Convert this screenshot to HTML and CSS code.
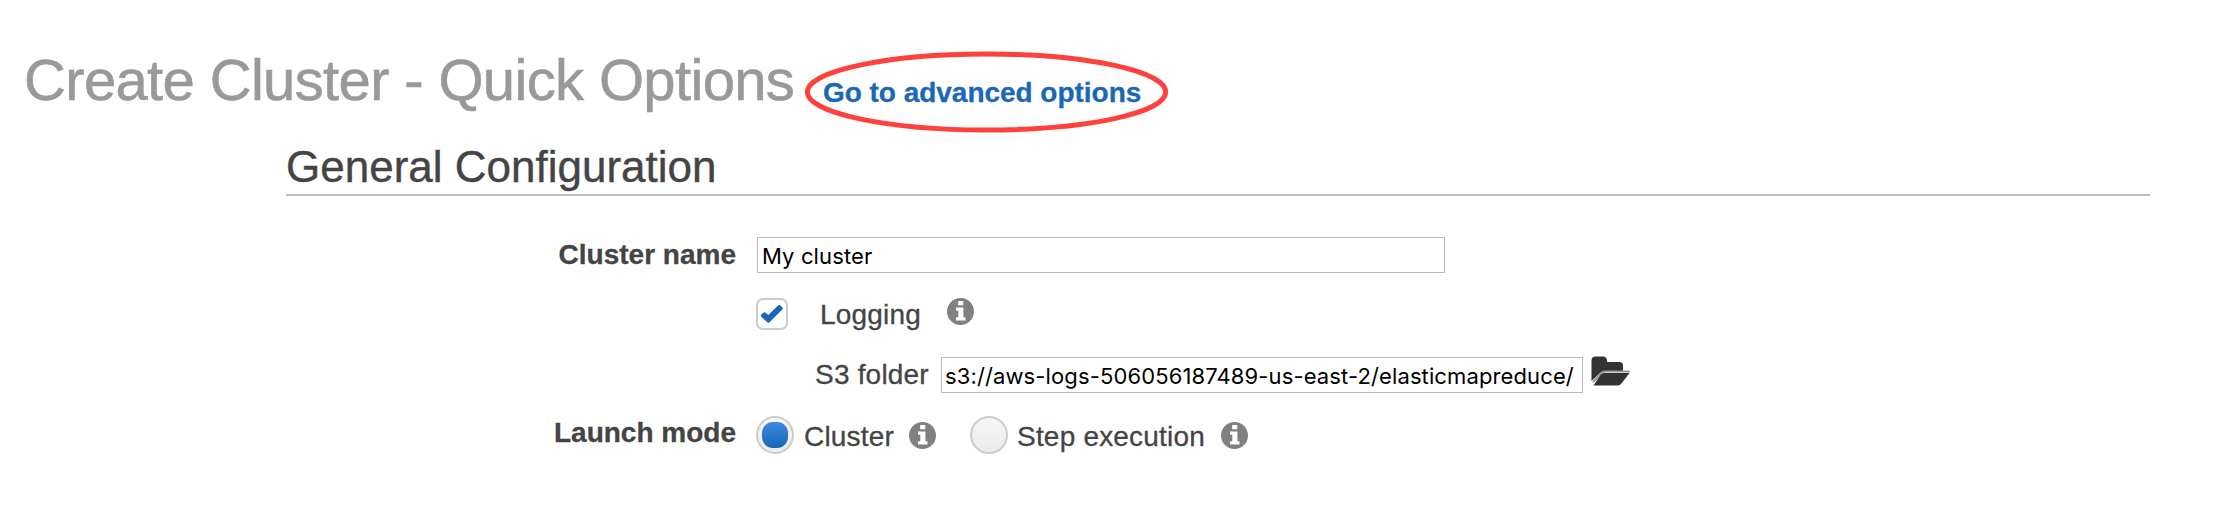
FILE: index.html
```html
<!DOCTYPE html>
<html lang="en">
<head>
<meta charset="utf-8">
<title>Create Cluster - Quick Options</title>
<link rel="stylesheet" href="styles.css">
</head>
<body>
<svg class="defs" width="0" height="0" aria-hidden="true">
  <symbol id="info" viewBox="0 0 27 27">
    <circle cx="13.5" cy="13.5" r="13.5" fill="#808080"/>
    <path fill="#fff" d="M11.2 3h5.1v4.2h-5.1zM9 9.4h7.4v9.9h2v3.3H9v-3.3h2.3v-6.6H9z"/>
  </symbol>
</svg>
<main class="page">
  <header class="head">
    <h1 class="title">Create Cluster - Quick Options</h1>
    <div class="callout">
      <a class="link">Go to advanced options</a>
      <svg class="ring" viewBox="0 0 366 84"><ellipse cx="182.500" cy="42" rx="179.2" ry="38" fill="none" stroke="#ff403c" stroke-width="5"/></svg>
    </div>
  </header>
  <h2 class="section">General Configuration</h2>
  <form class="form">
    <div class="row row-name">
      <label class="label">Cluster name</label>
      <input class="input input-name" type="text" value="My cluster">
    </div>
    <div class="row row-logging">
      <span class="check"><svg viewBox="0 0 32 32"><path d="M5.200 16.800 7.300 14.700q1.200-1 2.400 0l2.700 2.200L22 7.500q1.200-1 2.400 0l1.900 2q1 1.100 0 2.100L13.500 24.200q-1.100 1-2.200 0L5.200 18.800q-.9-1 0-2z"/></svg></span>
      <span class="text text-logging">Logging</span>
      <svg class="info"><use href="#info"/></svg>
    </div>
    <div class="row row-folder">
      <label class="text text-folder">S3 folder</label>
      <input class="input input-folder" type="text" value="s3://aws-logs-506056187489-us-east-2/elasticmapreduce/">
      <svg class="folder" viewBox="0 0 40 30"><path d="M.5 25V4.500Q.5.500 4.500.500H12q3.700 0 4 4V6h12.500q3.500 0 3.500 3.500V15H14q-3.500 0-5.500 2.500z"/><path class="edge" d="M2 26 10 17.500q1.700-2 4-2H39"/><path d="M13.500 17H38.500L30.500 27.500q-1.500 2-4 2H2.500L9.500 19q1.500-2 4-2z"/></svg>
    </div>
    <div class="row row-mode">
      <label class="label label-mode">Launch mode</label>
      <span class="radio radio-on"></span>
      <span class="text text-cluster">Cluster</span>
      <svg class="info info-cluster"><use href="#info"/></svg>
      <span class="radio"></span>
      <span class="text text-step">Step execution</span>
      <svg class="info"><use href="#info"/></svg>
    </div>
  </form>
</main>
</body>
</html>
```
FILE: styles.css
```css
* { box-sizing: border-box; }
body { margin: 0; background: #fff; color: #444; font-family: "Liberation Sans", Arial, sans-serif; }
.defs { display: block; }
.page { width: 2216px; height: 514px; overflow: hidden; }

.head { display: flex; align-items: flex-start; height: 140px; padding: 50px 0 0 24px; }
.title { margin: 0; width: 780px; color: #999; font-size: 58px; font-weight: 400; line-height: 60px; letter-spacing: -0.65px; white-space: nowrap; -webkit-text-stroke: 0.6px; }
.callout { position: relative; width: 364px; height: 83px; padding: 27px 0 0 19px; }
.link { display: block; color: #1a67b8; font-size: 28px; font-weight: 700; line-height: 32px; letter-spacing: -0.03px; white-space: nowrap; -webkit-text-stroke: 0.3px; }
.ring { position: absolute; left: 0; top: 0; width: 366px; height: 84px; }

.section { margin: 0 66px 0 286px; height: 56px; border-bottom: 2px solid #bbb; font-size: 44px; font-weight: 400; line-height: 54px; white-space: nowrap; -webkit-text-stroke: 0.4px; }

.form { display: flex; flex-direction: column; padding-top: 41px; font-size: 28px; line-height: 32px; }
.row { display: flex; align-items: flex-start; white-space: nowrap; }
.row-name { height: 61px; }
.label { width: 757px; padding-right: 21px; padding-top: 2px; font-weight: 700; text-align: right; -webkit-text-stroke: 0.3px; }
.text { letter-spacing: 0.2px; padding-top: 1px; -webkit-text-stroke: 0.3px; }
.input { height: 36px; margin: 0; padding: 2px 0 0 4px; border: 1px solid #bbb; border-radius: 0; background: #fff; color: #000; font: 22px/32px Inter, sans-serif; letter-spacing: 0.12px; outline: none; }
.input-name { width: 688px; }

.row-logging { height: 59px; padding-left: 756px; }
.check { width: 32px; height: 32px; border: 2px solid #ccc; border-radius: 7px; }
.check svg { display: block; width: 32px; height: 32px; margin: -2px; fill: #1a67b8; }
.text-logging { width: 126.5px; margin-left: 32px; }
.info { flex: none; width: 27px; height: 27px; }

.row-folder { height: 59px; padding-left: 815px; }
.text-folder { width: 126px; padding-top: 2px; }
.input-folder { width: 642px; padding-left: 3px; }
.folder { width: 40px; height: 30px; margin-left: 8px; margin-top: -1px; fill: #333; }
.folder .edge { fill: none; stroke: #999; stroke-width: 2; }

.row-mode { height: 38px; }
.label-mode { width: 756px; padding-right: 20px; padding-top: 1px; }
.radio { width: 38px; height: 38px; padding: 4px; border: 2px solid #ccc; border-radius: 50%; background: linear-gradient(#f6f6f6, #ececec); }
.radio-on::before { content: ""; display: block; width: 26px; height: 26px; border-radius: 11px; background: linear-gradient(#3a8ade, #1a67b8); }
.row-mode .text { padding-top: 5px; }
.text-cluster { width: 104.5px; margin-left: 10px; }
.row-mode .info { margin-top: 6px; }
.info-cluster { margin-right: 34.5px; }
.text-step { width: 204px; margin-left: 9px; }
```
